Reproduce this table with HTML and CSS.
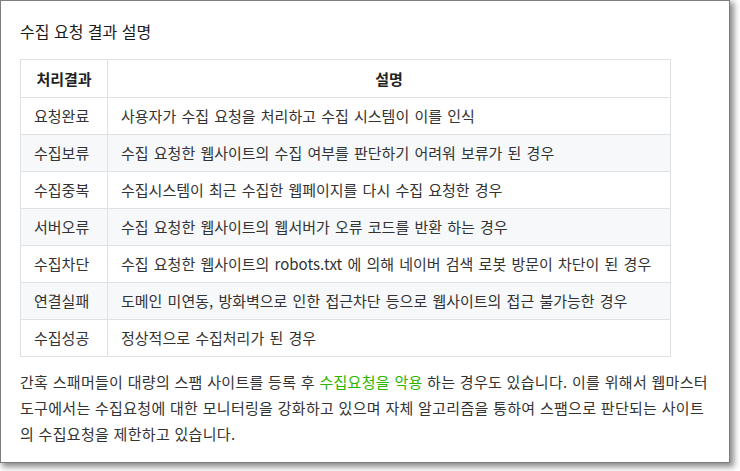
FILE: index.html
```html
<!DOCTYPE html>
<html lang="ko">
<head>
<meta charset="utf-8">
<link rel="stylesheet" href="styles.css">
</head>
<body>
<div class="card">
  <h3 class="title">수집 요청 결과 설명</h3>
  <table class="result-table">
    <thead>
      <tr><th class="col-name">처리결과</th><th class="col-desc">설명</th></tr>
    </thead>
    <tbody>
      <tr><td>요청완료</td><td>사용자가 수집 요청을 처리하고 수집 시스템이 이를 인식</td></tr>
      <tr><td>수집보류</td><td>수집 요청한 웹사이트의 수집 여부를 판단하기 어려워 보류가 된 경우</td></tr>
      <tr><td>수집중복</td><td>수집시스템이 최근 수집한 웹페이지를 다시 수집 요청한 경우</td></tr>
      <tr><td>서버오류</td><td>수집 요청한 웹사이트의 웹서버가 오류 코드를 반환 하는 경우</td></tr>
      <tr><td>수집차단</td><td>수집 요청한 웹사이트의 robots.txt 에 의해 네이버 검색 로봇 방문이 차단이 된 경우</td></tr>
      <tr><td>연결실패</td><td>도메인 미연동, 방화벽으로 인한 접근차단 등으로 웹사이트의 접근 불가능한 경우</td></tr>
      <tr><td>수집성공</td><td>정상적으로 수집처리가 된 경우</td></tr>
    </tbody>
  </table>
  <p class="note">간혹 스패머들이 대량의 스팸 사이트를 등록 후 <span class="hl">수집요청을 악용</span> 하는 경우도 있습니다. 이를 위해서 웹마스터<br>도구에서는 수집요청에 대한 모니터링을 강화하고 있으며 자체 알고리즘을 통하여 스팸으로 판단되는 사이트<br>의 수집요청을 제한하고 있습니다.</p>
</div>
</body>
</html>
```
FILE: styles.css
```css
html, body {
  margin: 0;
  padding: 0;
  background: #ffffff;
}
body {
  font-family: "Noto Sans CJK KR", "Noto Sans", sans-serif;
  color: #333333;
  width: 740px;
  height: 471px;
  overflow: hidden;
}
.card {
  box-sizing: border-box;
  width: 730px;
  height: 463px;
  border: 1px solid #7d7d7d;
  background: #ffffff;
  box-shadow: 3px 3px 6px 1px rgba(0, 0, 0, 0.45);
  padding: 19px 19px 0 19px;
}
.title {
  margin: 0;
  font-size: 16px;
  font-weight: 400;
  color: #1a1a1a;
  line-height: 22px;
}
.result-table {
  margin-top: 17px;
  border-collapse: collapse;
  width: 651px;
  font-size: 15px;
}
.result-table th,
.result-table td {
  border: 1px solid #dfe2e5;
  padding: 0 13px;
  height: 36px;
  line-height: 22px;
  color: #333333;
}
.result-table th {
  font-weight: 700;
  text-align: center;
  color: #222222;
  height: 37px;
}
.result-table td {
  text-align: left;
  word-spacing: 1px;
}
.col-name {
  width: 60px;
}
.result-table tbody tr:nth-child(2n) {
  background: #f6f8fa;
}
.note {
  margin: 12px 0 0 0;
  font-size: 15px;
  line-height: 26px;
  color: #333333;
  letter-spacing: 0.3px;
  white-space: nowrap;
}
.hl {
  color: #2db400;
}
```
